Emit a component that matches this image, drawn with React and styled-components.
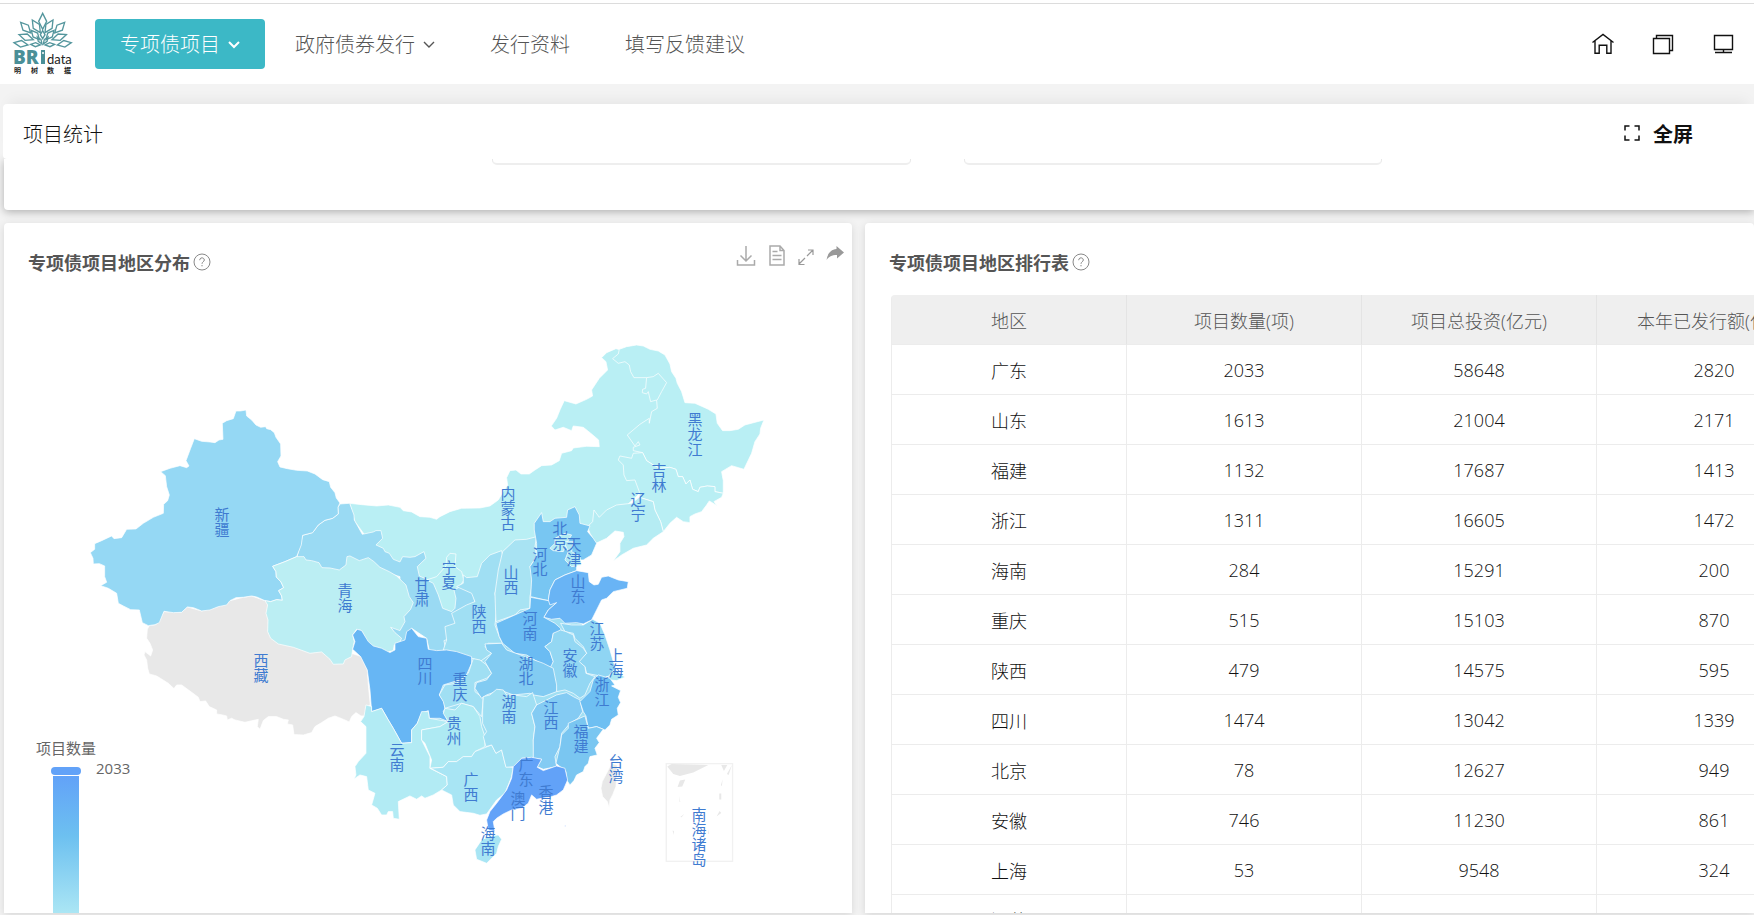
import styled, { createGlobalStyle } from "styled-components";

const GlobalStyle = createGlobalStyle`
  * {
    box-sizing: border-box;
  }
  body {
    margin: 0;
    background: #f3f3f3;
    color: #111;
    font-family: "Open Sans", "Noto Sans CJK SC", sans-serif;
    font-weight: 300;
  }
  button, input {
    font: inherit;
    color: inherit;
  }
`;

const Shell = styled.div`
  display: flex;
  flex-direction: column;
  height: 100vh;
  padding-bottom: 2px;
  overflow: hidden;
`;

const Header = styled.header`
  flex: none;
  display: flex;
  align-items: center;
  height: 84px;
  padding: 0 19px 0 12px;
  border-top: 3px solid #fff;
  background: #fff;
  box-shadow: inset 0 1px 0 #dcdcdc;
`;

const Logo = styled.svg`
  flex: none;
  width: 62px;
  height: 66px;
  margin-right: 21px;
`;

const Nav = styled.nav`
  display: flex;
  flex: 1;
  gap: 5px;
`;

const NavItem = styled.button`
  display: flex;
  align-items: center;
  gap: 8px;
  height: 50px;
  padding: 0 25px;
  border: 0;
  border-radius: 4px;
  background: ${(props) => (props.$active ? "#3cb8c6" : "none")};
  color: ${(props) => (props.$active ? "#fff" : "#555")};
  font-size: 20px;
  white-space: nowrap;
`;

const HeaderIcons = styled.div`
  display: flex;
  gap: 36px;
`;

const IconButton = styled.button`
  display: flex;
  padding: 0;
  border: 0;
  background: none;
  color: ${(props) => props.$color || "#111"};
`;

const TitleBar = styled.section`
  position: relative;
  flex: none;
  display: flex;
  align-items: center;
  justify-content: space-between;
  height: 55px;
  margin: 20px 0 0 3px;
  padding: 3px 61px 0 20px;
  border-radius: 4px 0 0 4px;
  background: #fff;
  box-shadow: 0 -10px 12px -6px rgba(0, 0, 0, 0.05);
`;

const PageTitle = styled.h1`
  margin: 0;
  font-size: 20px;
  font-weight: 300;
`;

const FullScreen = styled.button`
  display: flex;
  align-items: center;
  gap: 13px;
  padding: 0;
  border: 0;
  background: none;
  font-size: 20px;
  font-weight: 700;
`;

const FilterCard = styled.section`
  flex: none;
  height: 51px;
  margin-left: 4px;
  border-radius: 0 0 0 4px;
  background: #fff;
  box-shadow: 0 2px 8px rgba(0, 0, 0, 0.28);
`;

const FilterRow = styled.div`
  display: flex;
  align-items: flex-end;
  gap: 53px;
  height: 6px;
  padding: 0 372px 0 488px;
  overflow: hidden;
`;

const FilterInput = styled.input`
  flex: 1;
  min-width: 0;
  height: 40px;
  border: 1px solid #e8e8e8;
  border-bottom: 2px solid #eee;
  border-radius: 5px;
  outline: 0;
`;

const Panels = styled.main`
  flex: 1;
  min-height: 0;
  display: grid;
  grid-template-columns: 848fr 889fr;
  grid-template-rows: 100%;
  gap: 13px;
  margin-top: 13px;
  padding-left: 4px;
`;

const Card = styled.section`
  min-width: 0;
  border-radius: 4px 4px 0 0;
  background: #fff;
  box-shadow: 0 2px 8px rgba(0, 0, 0, 0.12);
  overflow: hidden;
`;

const CardHead = styled.div`
  display: flex;
  align-items: flex-start;
  justify-content: space-between;
  height: ${(props) => props.$height}px;
  padding: 22px 8px 0 24px;
`;

const CardTitle = styled.h2`
  display: flex;
  align-items: center;
  gap: 3px;
  height: 33px;
  margin: 0;
  color: #555;
  font-size: 18px;
  font-weight: 700;
`;

const Tools = styled.div`
  display: flex;
  gap: 12px;
`;

const MapSvg = styled.svg`
  display: block;
  width: 100%;
`;

const Province = styled.path`
  fill: ${(props) => props.$fill};
  stroke: #fff;
  stroke-opacity: 0.7;
  stroke-width: 3;
  stroke-linejoin: round;
`;

const Outline = styled(Province)`
  fill: none;
`;

const MapLabel = styled.text`
  fill: #3f7bd1;
  font-family: "Noto Sans CJK SC", sans-serif;
  font-size: 15px;
  font-weight: 400;
  writing-mode: vertical-rl;
`;

const LegendText = styled.text`
  fill: #666;
  font-size: 15px;
  font-weight: 400;
`;

const TableWrap = styled.div`
  margin-left: 26px;
  border-radius: 4px 0 0 0;
  overflow: hidden;
`;

const Table = styled.table`
  width: 941px;
  table-layout: fixed;
  border-collapse: separate;
  border-spacing: 0;
  border-left: 1px solid #ececec;
  font-size: 18px;

  th, td {
    height: 50px;
    padding: 0;
    border-right: 1px solid #ececec;
    border-bottom: 1px solid #ececec;
    text-align: center;
    font-weight: 300;
    white-space: nowrap;
  }
  th {
    border-right-color: #e4e4e4;
    background: #efefef;
    color: #555;
  }
`;

const NW = [0, 0];
const NE = [1320, 0];
const W = [0, 1050];
const N = [1320, 810];
const S = [1020, 1050];
const SE = [1680, 1350];

const provinces = [
  { name: "内蒙古", at: NE, fill: "#b9eff4", d: "M-271 880L-235 884-190 888-155 885-120 892-110 902-85 906-60 920-30 922-10 928 0 920 30 905 65 895 120 894 150 888 175 870 190 845 203 825 200 803 210 782 228 780 243 792 268 792 285 780 305 767 335 765 358 752 365 730 395 722 400 714 440 709 478 710 476 690 455 672 430 652 400 648 395 662 370 652 345 660 334 648 350 625 360 600 373 572 408 582 440 568 458 558 455 540 478 505 503 480 498 455 485 443 500 428 528 416 580 430 660 520 652 640 608 740 600 850 500 940 445 950 400 935 300 1050 120 1120 65 1250-5 1200-70 1108-200 1010-255 935Z" },
  { name: "黑龙江", at: NE, fill: "#b9eff4", d: "M538 418L560 410 590 405 610 408 630 418 655 423 675 435 690 462 695 485 708 505 712 520 725 545 735 578 765 580 788 590 805 598 828 612 832 640 848 662 870 662 895 658 915 645 972 630 962 655 960 672 945 695 935 730 912 778 875 767 845 785 850 812 850 850 825 845 825 830 802 828 780 832 775 845 758 838 750 810 738 822 728 800 715 800 708 778 690 772 660 775 640 765 620 752 608 728 580 722 580 712 600 705 595 695 585 708 562 675 600 643 628 625 628 640 635 605 652 595 650 570 632 575 625 545 620 552 607 548 608 538 617 535 620 503 582 503 572 485 568 465 555 455 535 460 518 446 535 432Z" },
  { name: "吉林", at: NE, fill: "#b9eff4", d: "M608 728L620 752 640 765 660 775 690 772 708 778 715 800 728 800 738 822 750 810 758 838 775 845 780 832 802 828 825 830 825 845 850 850 845 862 822 875 832 887 808 873 800 885 785 905 765 912 750 920 750 938 730 935 710 922 690 940 670 965 662 935 645 900 640 875 598 862 598 845 585 810 560 812 552 795 550 765 535 750 540 738 575 745 580 730Z" },
  { name: "辽宁", at: NE, fill: "#b5ecf3", d: "M462 900L478 922 500 900 530 885 575 880 598 862 640 875 645 900 662 935 670 965 640 985 620 1005 580 1015 545 1035 520 1053 540 1025 540 1000 552 980 550 967 525 963 500 985 468 1000 450 970 443 950 458 935Z" },
  { name: "西藏", at: W, fill: "#e8e8e8", d: "M448 197L468 194 492 155 545 157 562 141 605 153 655 140 690 122 730 112 755 108 795 122 850 120 1000 250 1060 282 1085 290 1102 330 1106 385 1111 435 1100 440 1095 468 1083 468 1068 458 1055 470 1048 486 1030 478 1005 468 985 475 965 488 945 500 935 518 910 525 882 524 878 495 862 492 865 480 850 478 830 470 805 470 790 482 780 508 772 500 775 478 735 487 705 480 695 475 682 480 680 468 668 465 650 462 650 450 628 440 617 423 600 425 595 412 575 397 545 375 530 375 522 386 505 370 470 348 448 342 443 325 440 300 432 285 435 275 452 288 458 270 450 250 440 235 442 208Z" },
  { name: "甘肃", at: NW, fill: "#9adaf3", d: "M1020 882L1049 880 1062 915 1063 930 1087 973 1120 966 1128 962 1143 962 1148 985 1128 1005 1150 1015 1155 1025 1168 1030 1180 1048 1200 1056 1208 1040 1230 1042 1245 1040 1272 1025 1278 1045 1252 1070 1258 1098 1290 1112 1385 1128 1420 1150 1425 1180 1420 1215 1365 1222 1370 1248 1340 1255 1352 1285 1332 1292 1338 1322 1290 1330 1280 1285 1235 1255 1220 1290 1200 1300 1172 1252 1200 1220 1200 1100 1100 1070 1000 1100 890 1045 908 976 938 968 955 945 975 931 998 925 1015 912 1014 892Z" },
  { name: "新疆", at: NW, fill: "#95d8f4", d: "M708 603L722 603 738 600 740 618 755 630 768 645 782 652 797 650 800 656 812 659 823 668 828 682 842 702 843 738 833 755 840 771 862 776 890 781 922 783 945 792 968 809 988 815 992 832 1005 848 1009 864 1020 879 1014 892 1015 912 998 925 975 931 955 945 938 968 908 976 904 1005 890 1040 855 1055 818 1069 828 1085 829 1101 843 1116 851 1133 836 1142 845 1158 847 1171 830 1169 812 1175 795 1172 770 1161 755 1158 730 1162 708 1163 690 1172 680 1185 655 1190 630 1200 605 1203 580 1193 562 1191 545 1207 520 1208 492 1204 478 1238 465 1244 445 1247 427 1238 418 1200 392 1199 370 1188 355 1180 350 1150 325 1135 302 1127 320 1117 314 1100 314 1068 298 1061 280 1062 279 1045 271 1028 284 1018 284 1001 305 992 335 978 342 986 365 983 380 958 408 957 430 940 460 922 490 910 491 883 503 872 508 855 500 830 496 797 482 785 510 775 540 767 560 773 567 768 558 752 572 715 583 686 605 694 630 696 645 698 657 690 669 688 667 640 680 632 700 626Z" },
  { name: "青海", at: NW, fill: "#bbeef3", d: "M818 1069L855 1055 890 1040 912 1040 918 1050 935 1052 957 1058 966 1073 990 1074 1018 1080 1038 1065 1041 1040 1050 1038 1078 1052 1105 1043 1122 1055 1140 1072 1168 1085 1190 1098 1218 1125 1228 1160 1240 1178 1232 1198 1212 1220 1215 1235 1200 1262 1172 1252 1185 1268 1205 1285 1198 1298 1183 1305 1180 1322 1155 1328 1120 1312 1103 1295 1085 1262 1070 1258 1058 1275 1063 1295 1058 1318 1055 1340 1035 1350 1030 1362 1000 1363 990 1348 965 1326 930 1330 880 1312 835 1302 812 1285 803 1265 804 1230 798 1210 803 1185 795 1172 812 1175 830 1169 847 1171 845 1158 836 1142 851 1133 843 1116 829 1101 828 1085Z" },
  { name: "宁夏", at: N, fill: "#b9eff4", d: "M-40 300L-10 290 18 258 20 232 30 220 48 222 45 260 65 275 72 300 58 322 42 330 48 355 45 385 35 395 8 385-5 345-20 310Z" },
  { name: "陕西", at: N, fill: "#a0dff3", d: "M185 212L190 235 180 300 165 340 172 380 165 435 178 470 188 490 145 490 135 500 155 520 120 545 85 530 60 520 10 510 20 480 15 440 45 430 35 400 80 375 105 365 95 340 50 320 70 310 70 285 80 293 112 290 125 250 150 225Z" },
  { name: "山西", at: N, fill: "#a8e3f3", d: "M290 170L285 200 290 230 270 260 280 300 270 350 270 385 240 390 225 405 168 425 165 340 175 270 188 215 225 180 260 178Z" },
  { name: "河北", at: N, fill: "#78c6f2", d: "M305 98L310 125 330 125 345 115 380 112 383 90 405 80 418 105 420 130 450 138 443 155 460 175 470 190 455 225 430 240 410 240 410 272 375 285 345 300 330 330 325 362 272 350 275 300 270 260 290 230 290 190 283 150 283 130Z" },
  { name: "北京", at: N, fill: "#b5ecf3", d: "M330 205L345 190 345 175 375 160 395 165 380 190 370 215 340 212Z" },
  { name: "天津", at: N, fill: "#ace7f3", d: "M372 185L400 185 395 215 420 230 425 255 395 260 375 240 385 215Z" },
  { name: "河南", at: N, fill: "#6bbcf3", d: "M272 352L325 362 350 368 325 390 312 412 345 430 362 445 365 460 340 460 335 485 315 500 330 515 340 545 335 565 300 550 260 525 225 520 188 490 178 470 168 430 225 405 270 385Z" },
  { name: "江苏", at: N, fill: "#8fd5f3", d: "M362 430L395 435 430 435 458 418 480 430 495 465 510 510 520 545 535 585 500 590 490 598 480 588 440 580 435 560 415 545 440 520 430 500 405 475 400 460 375 455Z" },
  { name: "山东", at: N, fill: "#69b4f5", d: "M325 360L330 330 345 300 375 285 410 272 445 278 448 305 462 315 475 313 485 292 505 288 535 300 565 305 562 325 520 335 500 355 485 360 470 390 455 420 430 432 410 428 375 430 360 415 335 418 312 412 325 390 350 368 330 375Z" },
  { name: "上海", at: N, fill: "#ace7f3", d: "M505 590L520 572 540 580 555 592 530 602 510 600Z" },
  { name: "安徽", at: N, fill: "#93d7f3", d: "M362 450L378 455 400 465 405 485 430 505 440 520 418 545 435 560 438 580 465 590 450 610 435 645 420 655 400 640 375 630 350 635 345 600 330 565 340 545 330 515 315 500 335 485 340 460Z" },
  { name: "四川", at: S, fill: "#67b6f4", d: "M52 208L65 212 85 245 100 258 125 265 150 278 165 270 165 250 195 240 200 215 215 205 235 230 260 235 265 268 290 272 320 270 350 275 395 290 395 310 375 355 310 375 298 405 312 425 315 445 310 455 325 485 300 475 268 475 265 452 245 460 232 490 215 510 215 548 185 550 160 505 145 480 125 445 95 455 90 390 82 330 62 290 38 268 45 245 38 225Z" },
  { name: "重庆", at: S, fill: "#a0dff3", d: "M400 296L420 300 440 315 455 340 440 355 405 368 405 395 430 415 425 470 400 440 365 430 315 445 310 425 298 405 315 375 350 370 385 340Z" },
  { name: "湖北", at: S, fill: "#82cbf2", d: "M435 252L485 250 500 270 550 288 610 310 640 325 650 375 650 395 610 410 580 405 570 400 520 405 480 390 440 405 425 415 405 385 410 368 440 360 455 340 435 305 455 280 440 270Z" },
  { name: "云南", at: S, fill: "#b2ebf4", d: "M78 435L95 440 95 455 125 445 145 480 160 505 185 550 215 548 215 510 232 490 245 455 265 455 268 475 325 485 300 500 245 510 245 540 270 590 270 625 320 650 322 675 305 690 280 705 255 715 245 708 230 718 210 708 175 725 178 778 160 775 158 755 145 755 140 765 125 765 112 745 95 735 105 700 85 690 80 650 60 645 42 657 48 645 45 620 55 605 78 580 78 500 62 485 72 470Z" },
  { name: "贵州", at: S, fill: "#aeeaf3", d: "M315 445L345 450 365 430 400 440 420 470 425 500 435 530 435 560 405 575 395 590 370 590 350 605 325 605 310 622 270 625 275 600 255 550 245 540 245 510 300 500 325 485 310 460Z" },
  { name: "广西", at: S, fill: "#a8e5f4", d: "M310 622L325 605 350 605 370 590 395 590 405 575 455 555 468 580 485 570 498 620 520 622 515 650 495 700 470 720 440 762 420 766 400 760 360 755 340 735 335 705 305 690 322 675 320 650 272 625Z" },
  { name: "湖南", at: S, fill: "#a0dff3", d: "M430 410L450 405 470 388 490 390 500 405 520 405 560 410 578 398 590 435 575 460 585 500 580 540 582 595 545 595 525 620 498 622 485 570 468 580 455 555 438 560 430 530 440 515 428 490 428 450Z" },
  { name: "江西", at: S, fill: "#84cbf3", d: "M590 435L620 420 650 405 680 398 700 410 720 420 728 455 715 475 690 490 665 520 660 560 645 590 650 620 610 628 592 620 605 598 580 595 580 540 585 500 575 460Z" },
  { name: "浙江", at: SE, fill: "#6ebff2", d: "M60 125L90 95 100 60 115 45 150 55 165 75 155 78 182 92 175 112 182 128 172 145 175 165 155 178 150 195 135 210 110 200 85 205 78 168 70 155Z" },
  { name: "福建", at: SE, fill: "#7ac6f1", d: "M75 168L85 205 110 200 130 208 110 235 118 248 105 265 112 285 90 290 85 310 75 320 70 335 50 345 42 362 30 375 20 360 18 335 0 320-12 310 0 260 5 225 25 205 25 190Z" },
  { name: "广东", at: S, fill: "#62a2f8", d: "M545 595L575 592 605 598 592 622 610 632 650 618 675 625 683 660 670 690 650 705 635 710 605 715 590 718 575 705 565 730 545 745 515 750 490 762 470 775 460 785 465 815 445 810 440 780 450 755 470 730 500 690 515 655 520 620Z" },
  { name: "海南", at: S, fill: "#a8e5f4", d: "M425 840L450 828 475 825 485 838 475 860 470 880 440 910 410 898 405 870Z" },
  { name: "台湾", at: SE, fill: "#e8e8e8", d: "M155 310L172 316 170 350 168 380 158 405 150 420 148 445 142 425 128 410 123 385 127 365 140 340Z" },
];

const labels = [
  ["新疆", 222, 507], ["青海", 345, 583], ["甘肃", 422, 577], ["西藏", 261, 653],
  ["黑龙江", 695, 412], ["吉林", 659, 463], ["辽宁", 638, 492], ["内蒙古", 508, 486],
  ["北京", 560, 521], ["天津", 574, 537], ["河北", 540, 547], ["宁夏", 449, 560],
  ["山西", 511, 565], ["山东", 578, 574], ["陕西", 479, 604], ["河南", 530, 611],
  ["江苏", 597, 621], ["安徽", 570, 648], ["上海", 616, 648], ["湖北", 526, 656],
  ["浙江", 602, 677], ["重庆", 460, 672], ["四川", 425, 656], ["湖南", 509, 694],
  ["江西", 551, 700], ["福建", 581, 724], ["贵州", 454, 716], ["云南", 397, 742],
  ["广西", 471, 772], ["广东", 526, 757], ["澳门", 518, 791], ["香港", 546, 785],
  ["海南", 488, 826], ["台湾", 616, 754], ["南海诸岛", 699, 807],
];

const columns = ["地区", "项目数量(项)", "项目总投资(亿元)", "本年已发行额(亿元)"];

const rows = [
  ["广东", 2033, 58648, 2820],
  ["山东", 1613, 21004, 2171],
  ["福建", 1132, 17687, 1413],
  ["浙江", 1311, 16605, 1472],
  ["海南", 284, 15291, 200],
  ["重庆", 515, 15103, 870],
  ["陕西", 479, 14575, 595],
  ["四川", 1474, 13042, 1339],
  ["北京", 78, 12627, 949],
  ["安徽", 746, 11230, 861],
  ["上海", 53, 9548, 324],
  ["江苏", "", "", ""],
];

// tip x, tip y, base x, base y, half width
const leaves = [
  [128, 40, 128, 88, 12], [97, 60, 121, 98, 11], [159, 60, 135, 98, 11],
  [62, 67, 92, 99, 11], [194, 67, 164, 99, 11], [57, 104, 100, 119, 10],
  [199, 104, 156, 119, 10], [42, 128, 84, 135, 10], [214, 128, 172, 135, 10],
  [92, 133, 121, 135, 6], [164, 133, 135, 135, 6], [94, 91, 118, 119, 9],
  [162, 91, 138, 119, 9], [128, 92, 128, 116, 7], [112, 111, 126, 132, 5],
  [144, 111, 130, 132, 5],
];

function leafPath([tx, ty, bx, by, w]) {
  const len = Math.hypot(tx - bx, ty - by);
  const nx = ((by - ty) / len) * w;
  const ny = ((tx - bx) / len) * w;
  const mx = (tx + bx) / 2;
  const my = (ty + by) / 2;
  return `M${tx} ${ty}L${mx + nx} ${my + ny}L${bx} ${by}L${mx - nx} ${my - ny}Z`;
}

function BrandLogo() {
  return (
    <Logo viewBox="12 11 62 66" role="img" aria-label="BRIdata 明树数据">
      <g transform="scale(0.3333)" fill="none" stroke="#54969d" strokeWidth="4">
        {leaves.map((leaf) => <path key={leaf.join()} d={leafPath(leaf)} />)}
      </g>
      <text x="13" y="64" fill="#4a8f97" fontFamily="Open Sans" fontWeight="800" fontSize="19">BR</text>
      <rect x="41" y="50" width="4" height="14" fill="#4a8f97" />
      <circle cx="43" cy="53" r="1" fill="#fff" />
      <text x="47" y="64" fill="#222" fontFamily="Lato" fontWeight="400" fontSize="13">data</text>
      <g fill="#222" fontFamily="Noto Sans CJK SC" fontWeight="700" fontSize="7">
        <text x="14" y="73">明</text>
        <text x="31" y="73">树</text>
        <text x="47" y="73">数</text>
        <text x="64" y="73">据</text>
      </g>
    </Logo>
  );
}

function Chevron({ thick }) {
  return (
    <svg width="12" height="12" viewBox="0 0 12 12" fill="none" stroke="currentColor" strokeWidth={thick ? 2 : 1.4}>
      <path d="M1 4l5 5 5-5" />
    </svg>
  );
}

function HelpIcon() {
  return (
    <svg width="18" height="18" viewBox="0 0 18 18" fill="none" stroke="#888">
      <circle cx="9" cy="9" r="8" />
      <path d="M6.7 7.2c0-3.2 4.6-3 4.6-.2 0 1.8-2.3 1.8-2.3 3.8M9 12v1.3" />
    </svg>
  );
}

function ChinaMap() {
  return (
    <MapSvg viewBox="4 280 848 700">
      <defs>
        <linearGradient id="scale" x1="0" y1="0" x2="0" y2="1">
          <stop offset="0" stopColor="#62a2f8" />
          <stop offset="0.4" stopColor="#6dc0f0" />
          <stop offset="0.9" stopColor="#a9e5f4" />
          <stop offset="1" stopColor="#b9eff4" />
        </linearGradient>
      </defs>
      <g transform="translate(0 210) scale(0.3333)">
        {/* land under the small seams between provinces */}
        <path
          fill="#a0dff3"
          d="M300 0L560-100 650 50 640 150 720 180 790 330 790 450 700 600 520 620 300 600 250 450Z"
          transform="translate(1020 1050)"
        />
        {provinces.map(({ name, at, fill, d }) => (
          <Province key={name} $fill={fill} d={d} transform={`translate(${at[0]} ${at[1]})`} />
        ))}
        <Outline d="M620 503L640 500 655 490 680 518 665 545 652 570" transform="translate(1320 0)" />
        <g transform="translate(1680 1350)" fill="#e8e8e8">
          <rect x="319" y="311" width="199" height="293" fill="none" stroke="#f1f1f1" strokeWidth="4" />
          <path d="M322 320L335 312 445 315 400 338 360 348 340 342ZM484 315L502 315 492 333ZM360 362L376 359 367 380 353 381Z" />
          <path d="M478 401h6v18h-6zM470 470l9-17 5 6zM338 512l4 1-1 12zM516 315l-10 30-5-3zM488 358l-2 20-3-2zM358 408l3 18h-2zM361 471l12-9-8 10zM444 508l4 12-3 3z" />
        </g>
        <circle cx="1696" cy="1848" r="2" fill="#cfe0ff" />
      </g>
      {labels.map(([name, x, y]) => (
        <MapLabel key={name} x={x} y={y}>{name}</MapLabel>
      ))}
      <LegendText x="36" y="754">项目数量</LegendText>
      <rect x="51" y="767" width="30" height="8" rx="4" fill="#62a2f8" />
      <rect x="53" y="776" width="26" height="150" fill="url(#scale)" />
      <LegendText x="96" y="774">2033</LegendText>
    </MapSvg>
  );
}

export default function App() {
  return (
    <Shell>
      <GlobalStyle />
      <Header>
        <BrandLogo />
        <Nav>
          <NavItem $active>专项债项目 <Chevron thick /></NavItem>
          <NavItem>政府债券发行 <Chevron /></NavItem>
          <NavItem>发行资料</NavItem>
          <NavItem>填写反馈建议</NavItem>
        </Nav>
        <HeaderIcons>
          <IconButton aria-label="首页">
            <svg width="24" height="24" viewBox="0 0 24 24" fill="none" stroke="currentColor" strokeWidth="1.4">
              <path d="M1.5 10.5L12 2.5l10.5 8M4 9v12.3h4.2v-8h7.6v8H20V9" />
            </svg>
          </IconButton>
          <IconButton aria-label="窗口">
            <svg width="24" height="24" viewBox="0 0 24 24" fill="none" stroke="currentColor" strokeWidth="1.4">
              <path d="M2.5 6.5h16v15h-16zM5.5 6V3.5h16v15h-3" />
            </svg>
          </IconButton>
          <IconButton aria-label="大屏">
            <svg width="24" height="24" viewBox="0 0 24 24" fill="none" stroke="currentColor" strokeWidth="1.4">
              <path d="M3.5 3.5h18v14h-18zM12.5 17.5v3M4 20.5h17" />
            </svg>
          </IconButton>
        </HeaderIcons>
      </Header>

      <TitleBar>
        <PageTitle>项目统计</PageTitle>
        <FullScreen>
          <svg width="16" height="16" viewBox="0 0 16 16" fill="none" stroke="currentColor" strokeWidth="1.5">
            <path d="M1 5.5V1h4.5M10.5 1H15v4.5M15 10.5V15h-4.5M5.5 15H1v-4.5" />
          </svg>
          全屏
        </FullScreen>
      </TitleBar>
      <FilterCard>
        <FilterRow>
          <FilterInput aria-label="地区" />
          <FilterInput aria-label="年份" />
        </FilterRow>
      </FilterCard>

      <Panels>
        <Card>
          <CardHead $height={57}>
            <CardTitle>专项债项目地区分布 <HelpIcon /></CardTitle>
            <Tools>
              <IconButton aria-label="下载" $color="#aaa">
                <svg width="20" height="22" viewBox="0 0 20 22" fill="none" stroke="currentColor" strokeWidth="1.5">
                  <path d="M10 1v15M4.5 10.5L10 16l5.5-5.5M1.5 15v5h17v-5" />
                </svg>
              </IconButton>
              <IconButton aria-label="数据" $color="#aaa">
                <svg width="18" height="22" viewBox="0 0 18 22" fill="none" stroke="currentColor" strokeWidth="1.5">
                  <path d="M2 1h10l4 4.5V20H2zM12 1v4.5h4M4.5 6.5h5M4.5 10.5h9M4.5 14.5h9" />
                </svg>
              </IconButton>
              <IconButton aria-label="放大" $color="#999">
                <svg width="16" height="24" viewBox="0 0 16 24" fill="none" stroke="currentColor" strokeWidth="1.2">
                  <path d="M9 11l6-6M10 5h5v5M7 13l-6 6M1 14v5.5h5.5" />
                </svg>
              </IconButton>
              <IconButton aria-label="分享" $color="#999">
                <svg width="18" height="16" viewBox="0 0 18 16" fill="currentColor">
                  <path d="M10.5 1L18 7.5l-7 6V10C5.500 10 3 11.500.5 15 1.5 9 4.5 4.5 10.5 4z" />
                </svg>
              </IconButton>
            </Tools>
          </CardHead>
          <ChinaMap />
        </Card>
        <Card>
          <CardHead $height={72}>
            <CardTitle>专项债项目地区排行表 <HelpIcon /></CardTitle>
          </CardHead>
          <TableWrap>
            <Table>
              <thead>
                <tr>{columns.map((name) => <th key={name} scope="col">{name}</th>)}</tr>
              </thead>
              <tbody>
                {rows.map((row) => (
                  <tr key={row[0]}>
                    {row.map((cell, i) => <td key={i}>{cell}</td>)}
                  </tr>
                ))}
              </tbody>
            </Table>
          </TableWrap>
        </Card>
      </Panels>
    </Shell>
  );
}
